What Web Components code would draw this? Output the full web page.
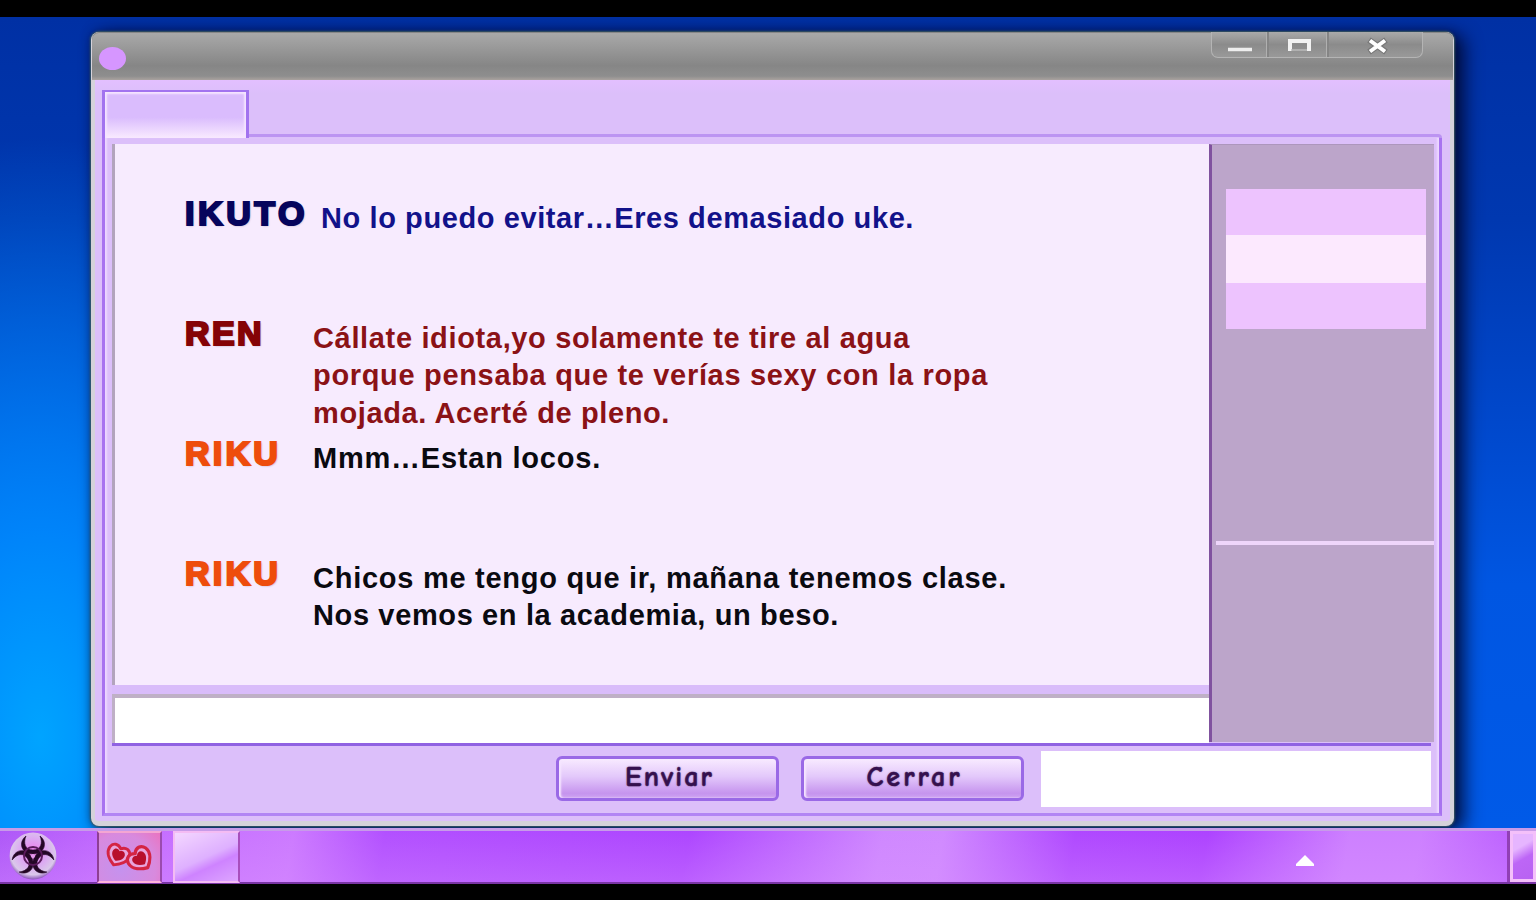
<!DOCTYPE html>
<html lang="es">
<head>
<meta charset="utf-8">
<title>Chat</title>
<style>
  html, body {
    margin: 0;
    height: 100%;
    background: #000;
    overflow: hidden;
    font-family: "Liberation Sans", Arial, sans-serif;
  }
</style>
</head>
<body>
<desk-top>
  <chat-window>
    <chat-message slot="log" name="IKUTO" name-width="123" color="#06045c" text-color="#12128a" indent="8">
      <fit-line width="593">No lo puedo evitar…Eres demasiado uke.</fit-line>
    </chat-message>
    <chat-message slot="log" name="REN" name-width="79" color="#850306" text-color="#8b1216">
      <fit-line width="597">Cállate idiota,yo solamente te tire al agua</fit-line>
      <fit-line width="675">porque pensaba que te verías sexy con la ropa</fit-line>
      <fit-line width="357">mojada. Acerté de pleno.</fit-line>
    </chat-message>
    <chat-message slot="log" name="RIKU" name-width="96" color="#ee4d0c" text-color="#0a0a10">
      <fit-line width="288">Mmm…Estan locos.</fit-line>
    </chat-message>
    <chat-message slot="log" name="RIKU" name-width="96" color="#ee4d0c" text-color="#0a0a10">
      <fit-line width="694">Chicos me tengo que ir, mañana tenemos clase.</fit-line>
      <fit-line width="526">Nos vemos en la academia, un beso.</fit-line>
    </chat-message>
    <side-panel slot="side"></side-panel>
    <push-button slot="actions"><fit-line width="89">Enviar</fit-line></push-button>
    <push-button slot="actions"><fit-line width="96">Cerrar</fit-line></push-button>
  </chat-window>
  <task-bar slot="bar"></task-bar>
</desk-top>

<script>
function define(name, html, setup) {
  const template = document.createElement("template");
  template.innerHTML = html;
  customElements.define(name, class extends HTMLElement {
    constructor() {
      super();
      this.attachShadow({ mode: "open" });
      this.shadowRoot.appendChild(template.content.cloneNode(true));
    }
    connectedCallback() {
      if (setup) setup(this, this.shadowRoot);
    }
  });
}

define("desk-top", /*html*/`
  <style>
    :host {
      display: flex;
      flex-direction: column;
      width: 1536px;
      height: 900px;
      box-sizing: border-box;
      padding: 17px 0 16px;
      background: #000;
    }
    .wall {
      height: 811px;
      box-sizing: border-box;
      padding: 15px 0 0 91px;
      overflow: hidden;
      background:
        radial-gradient(ellipse 330px 600px at 40px 720px, #00a4ff 0%, rgba(0,140,255,.85) 35%, rgba(0,90,230,0) 100%),
        linear-gradient(180deg, #0030a4 0%, #0038b0 25%, #0048cc 50%, #0056e2 70%, #005ae8 100%);
    }
  </style>
  <div class="wall"><slot></slot></div>
  <slot name="bar"></slot>`);

define("chat-window", /*html*/`
  <style>
    :host {
      display: flex;
      flex-direction: column;
      width: 1363px;
      height: 794px;
      box-sizing: border-box;
      border: 4px solid #d5d2da;
      border-width: 0 4px 5px;
      border-radius: 8px;
      background: #dcbffa;
      box-shadow: 0 0 2px 1px #3c5a60, 9px 4px 18px 1px rgba(0,5,40,.85), 0 0 9px 0 rgba(0,10,60,.5);
    }
    header {
      display: flex;
      justify-content: space-between;
      align-items: flex-start;
      height: 48px;
      margin: 0 -3px;
      border-radius: 7px 7px 0 0;
      background: linear-gradient(#aaa, #989898 35%, #868686 70%, #8e8e8e 92%, #aaa39f);
      box-shadow: inset 0 1px #888;
    }
    .orb {
      width: 27px;
      height: 23px;
      margin: 15px 0 0 7px;
      border-radius: 50%;
      background: #d696ff;
    }
    .controls {
      display: flex;
      height: 25px;
      margin: 0 30px 0 0;
      border: 1px solid #b4b4b4;
      border-top: 0;
      border-radius: 0 0 7px 7px;
      background: linear-gradient(#aaa, #8b8b8b 50%, #999);
    }
    .controls svg + svg { border-left: 2px solid #858585; box-shadow: -1px 0 #b0b0b0; }
    .body {
      flex: 1;
      display: flex;
      flex-direction: column;
      padding: 10px 8px 5px 7px;
      background: linear-gradient(#e3bfff, #dcbffa 14px);
      border-radius: 0 0 5px 5px;
    }
    .tabs { display: flex; height: 48px; }
    .tab {
      width: 147px;
      box-sizing: border-box;
      border: 3px solid #a273ef;
      border-width: 2px 3px 0;
      background: linear-gradient(#dabcfd 55%, #f9eaff);
      box-shadow: inset 2px 2px 2px #f5e4ff, inset -2px 0 2px #f5e4ff;
    }
    .rest {
      flex: 1;
      margin-top: 44px;
      border: 3px solid #bc94f2;
      border-width: 3px 3px 0 0;
      border-top-right-radius: 4px;
    }
    .panel {
      flex: 1;
      display: flex;
      flex-direction: column;
      border: 3px solid #a873f0;
      border-top: 0;
      border-bottom-color: #b285f4;
      padding: 6px 5px 0 7px;
      box-shadow: inset 3px 0 2px -1px #ecd8ff, inset -3px 0 2px -1px #ecd8ff;
    }
    .cols { display: flex; height: 599px; }
    .left { width: 1097px; display: flex; flex-direction: column; }
    .log {
      height: 541px;
      box-sizing: border-box;
      padding: 51px 0 0 70px;
      border-left: 3px solid #b3a4bd;
      background: #f7ebfe;
    }
    .gap { height: 9px; background: #d9bcfa; }
    .input {
      flex: 1;
      border: 3px solid #bfb0c6;
      border-width: 4px 0 0 3px;
      background: #fff;
    }
    .foot {
      flex: 1;
      display: flex;
      justify-content: flex-end;
      align-items: flex-start;
      margin-right: 3px;
      border-top: 3px solid #9062e2;
    }
    .box {
      width: 390px;
      height: 56px;
      margin: 5px 0 0 17px;
      background: #fff;
    }
    .actions { display: flex; gap: 22px; margin-top: 10px; }
  </style>
  <header>
    <div class="orb"></div>
    <div class="controls">
      <svg width="55" height="25"><path d="M16 17.500h24" stroke="#eee" stroke-width="3.500"/></svg>
      <svg width="58" height="25"><path d="M21 19V9h19v10" fill="none" stroke="#f2f2f2" stroke-width="4"/><path d="M22 18h16" stroke="#bbb" stroke-width="1.500"/></svg>
      <svg width="93" height="25"><path d="M40 8l17 12M57 8L40 20" stroke="#777" stroke-width="6"/><path d="M41 8.500l15 11M56 8.500l-15 11" stroke="#fff" stroke-width="4"/></svg>
    </div>
  </header>
  <div class="body">
    <div class="tabs"><div class="tab"></div><div class="rest"></div></div>
    <div class="panel">
      <div class="cols">
        <div class="left">
          <div class="log"><slot name="log"></slot></div>
          <div class="gap"></div>
          <div class="input"></div>
        </div>
        <slot name="side"></slot>
      </div>
      <div class="foot">
        <div class="actions"><slot name="actions"></slot></div>
        <div class="box"></div>
      </div>
    </div>
  </div>`);

define("chat-message", /*html*/`
  <style>
    :host { display: flex; height: 120px; }
    .name {
      width: 128px;
      flex: none;
      font: bold 34px/36px "Liberation Sans", Arial, sans-serif;
      -webkit-text-stroke: 2.2px currentColor;
      text-shadow: 1px 1px 2px rgba(60,40,70,.4);
    }
    .text {
      margin-top: 4.500px;
      font: bold 29px/37.500px "Liberation Sans", Arial, sans-serif;
    }
  </style>
  <div class="name"></div>
  <div class="text"><slot></slot></div>`, (el, root) => {
  const name = root.querySelector(".name");
  const text = root.querySelector(".text");
  const line = document.createElement("fit-line");
  line.textContent = el.getAttribute("name");
  line.setAttribute("width", el.getAttribute("name-width"));
  name.replaceChildren(line);
  name.style.color = el.getAttribute("color");
  text.style.color = el.getAttribute("text-color");
  text.style.marginLeft = (el.getAttribute("indent") || 0) + "px";
});

define("push-button", /*html*/`
  <style>
    :host { display: block; }
    button {
      display: block;
      width: 223px;
      height: 45px;
      padding: 0 0 3px 4px;
      border: 3px solid #9a69e6;
      border-radius: 6px;
      background: linear-gradient(#f8eaff, #e3c8fb 45%, #c694ee 88%, #cda2f2);
      box-shadow: inset 2px 0 2px #f6e6ff;
      text-align: center;
    }
    :host {
      color: #35104e;
      font: 900 28px/30px "Comic Sans MS", "Comic Neue", Lato, sans-serif;
    }
    button {
      color: inherit;
      font: inherit;
      -webkit-text-stroke: .5px #35104e;
      text-shadow: 0 0 2px #7c5a92;
    }
  </style>
  <button><slot></slot></button>`);

// one line of text, tracked out to the given width
define("fit-line", /*html*/`
  <style>
    :host { display: block; white-space: nowrap; }
    span { display: inline-block; }
  </style>
  <span><slot></slot></span>`, (el, root) => {
  const span = root.querySelector("span");
  const extra = el.getAttribute("width") - span.getBoundingClientRect().width;
  span.style.letterSpacing = extra / el.textContent.length + "px";
});

define("side-panel", /*html*/`
  <style>
    :host {
      display: flex;
      flex-direction: column;
      width: 225px;
      height: 598px;
      box-sizing: border-box;
      border-left: 3px solid #80529f;
      border-top: 1px solid #ad96bd;
      background: #bca5ca;
    }
    .list { height: 396px; box-sizing: border-box; padding: 44px 8px 0 14px; }
    .row { height: 46px; background: #edc3fe; }
    .row.on { height: 48px; background: #fce9fe; }
    hr { width: 218px; height: 4px; margin: 0 0 0 4px; border: 0; background: #eed5fa; }
  </style>
  <div class="list">
    <div class="row"></div>
    <div class="row on"></div>
    <div class="row"></div>
  </div>
  <hr>`);

define("task-bar", /*html*/`
  <style>
    :host {
      display: flex;
      height: 56px;
      box-sizing: border-box;
      border-top: 3px solid #c79be8;
      border-bottom: 2px solid #7a35a5;
      background:
        linear-gradient(rgba(190,80,255,0), rgba(220,150,255,.3)),
        linear-gradient(100deg, #ae58f8 0, #c36bff 120px, #cc7aff 290px, #b250ff 380px, #ad46ff 680px, #cf88ff 870px, #d08aff 930px, #af48ff 1060px, #ad43ff 1190px, #cd80ff 1330px, #cd80ff 1400px, #b95bff 1510px);
    }
    .start { width: 97px; flex: none; }
    .start svg { display: block; margin: 0 0 0 8px; }
    .task {
      width: 65px;
      height: 52px;
      box-sizing: border-box;
      border: 2px solid #8e3f93;
      border-right-color: #9b4aae;
      border-top-color: #f4a6d2;
      border-bottom-color: #ffb3dc;
      background: radial-gradient(circle at 35% 75%, #c592ee, #d88ade 65%, #ea73c0);
    }
    .blank {
      margin-left: 11px;
      width: 67px;
      border: 2px solid #f4bcf4;
      border-right-color: #a84fbd;
      background: linear-gradient(155deg, #f4d7ff, #deb0ff 50%, #ce83ff 65%, #dda6ff);
    }
    .tray { flex: 1; display: flex; justify-content: flex-end; }
    .arrow { margin: 24px 196px 0 0; width: 18px; height: 12px; }
    .show {
      width: 26px;
      box-sizing: border-box;
      border: 3px solid #f4c0fa;
      box-shadow: -3px 0 #9140b5;
      background: linear-gradient(150deg, #e6b5ff 30%, #bd66f6 55%, #b862f2);
    }
  </style>
  <div class="start">
    <svg width="50" height="50" viewBox="-25 -25 50 50">
      <defs>
        <radialGradient id="ball" cx=".5" cy=".42" r=".6">
          <stop offset="0" stop-color="#f07aee"/>
          <stop offset=".5" stop-color="#dcaaf2"/>
          <stop offset=".8" stop-color="#dac8ea"/>
          <stop offset="1" stop-color="#7a3eae"/>
        </radialGradient>
        <path id="horn" d="M-7-20C-15-14-12-2 0-2S15-14 7-20C10-13 8-6 0-6S-10-13-7-20Z"/>
      </defs>
      <circle r="23.500" fill="url(#ball)"/>
      <g fill="#240726" stroke="#240726" stroke-width=".6">
        <use href="#horn"/>
        <use href="#horn" transform="rotate(120)"/>
        <use href="#horn" transform="rotate(240)"/>
      </g>
      <circle r="9" fill="none" stroke="#5a1a5c" stroke-width="2"/>
      <circle r="2" fill="#e49aea"/>
    </svg>
  </div>
  <div class="task">
    <svg width="61" height="48" viewBox="0 0 61 48">
      <defs>
        <path id="heart" d="M0 8C-4 6-9 2-8-3C-7-7-3-8 0-5C3-8 7-7 8-3C9 2 4 6 0 8Z"/>
      </defs>
      <g stroke-linejoin="round">
        <g transform="translate(19 22) rotate(24)">
          <use href="#heart" transform="scale(1.350)" fill="#e9a4dc" stroke="#d42443" stroke-width="2.200"/>
          <use href="#heart" transform="scale(.8)" fill="#b80f2c"/>
        </g>
        <g transform="translate(41 26) rotate(-42)">
          <use href="#heart" transform="scale(1.450)" fill="#e9a4dc" stroke="#d42443" stroke-width="2.200"/>
          <use href="#heart" transform="scale(.9)" fill="#b80f2c"/>
        </g>
      </g>
    </svg>
  </div>
  <div class="task blank"></div>
  <div class="tray">
    <svg class="arrow" viewBox="0 0 18 12"><path d="M9 0l9 9v2H0V9z" fill="#fff"/></svg>
    <div class="show"></div>
  </div>`);
</script>
</body>
</html>
